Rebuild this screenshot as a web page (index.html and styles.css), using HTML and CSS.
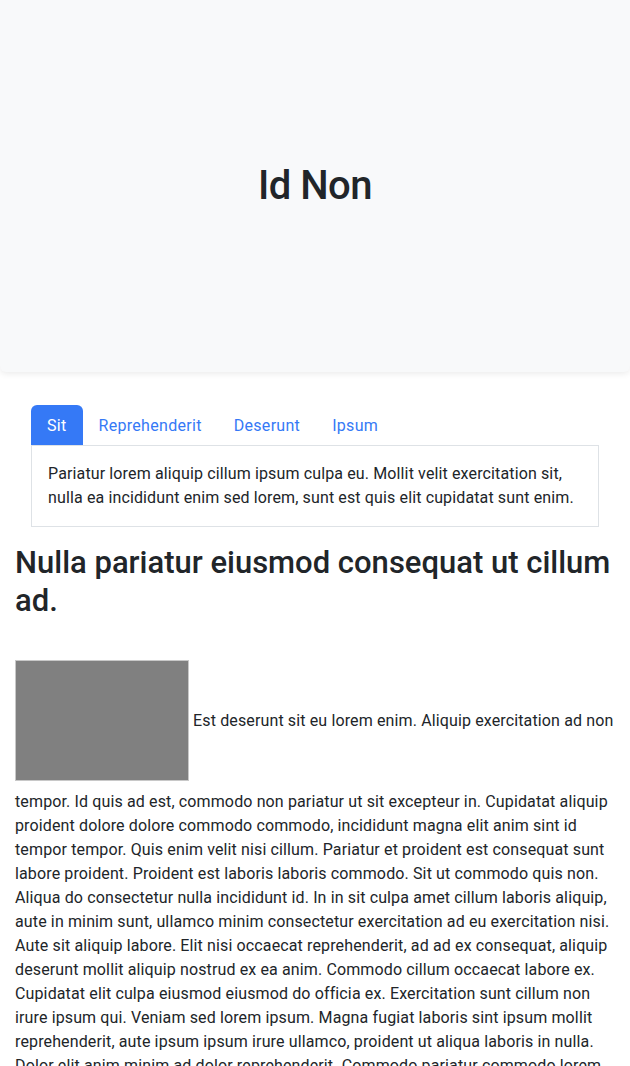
FILE: index.html
```html
<!DOCTYPE html>
<html lang="en">
<head>
<meta charset="utf-8">
<title>Id Non</title>
<link rel="stylesheet" href="styles.css">
</head>
<body>
<header class="hero">
  <h1 class="hero-title">Id Non</h1>
</header>
<main class="container">
  <section class="tabs">
    <nav class="tab-nav">
      <a class="tab active" href="#">Sit</a>
      <a class="tab" href="#">Reprehenderit</a>
      <a class="tab" href="#">Deserunt</a>
      <a class="tab" href="#">Ipsum</a>
    </nav>
    <div class="tab-panel">
      Pariatur lorem aliquip cillum ipsum culpa eu. Mollit velit exercitation sit, nulla ea incididunt enim sed lorem, sunt est quis elit cupidatat sunt enim.
    </div>
  </section>
  <h1 class="heading">Nulla pariatur eiusmod consequat ut cillum ad.</h1>
  <p class="body-text"><span class="placeholder"></span> Est deserunt sit eu lorem enim. Aliquip exercitation ad non tempor. Id quis ad est, commodo non pariatur ut sit excepteur in. Cupidatat aliquip proident dolore dolore commodo commodo, incididunt magna elit anim sint id tempor tempor. Quis enim velit nisi cillum. Pariatur et proident est consequat sunt labore proident. Proident est laboris laboris commodo. Sit ut commodo quis non. Aliqua do consectetur nulla incididunt id. In in sit culpa amet cillum laboris aliquip, aute in minim sunt, ullamco minim consectetur exercitation ad eu exercitation nisi. Aute sit aliquip labore. Elit nisi occaecat reprehenderit, ad ad ex consequat, aliquip deserunt mollit aliquip nostrud ex ea anim. Commodo cillum occaecat labore ex. Cupidatat elit culpa eiusmod eiusmod do officia ex. Exercitation sunt cillum non irure ipsum qui. Veniam sed lorem ipsum. Magna fugiat laboris sint ipsum mollit reprehenderit, aute ipsum ipsum irure ullamco, proident ut aliqua laboris in nulla. Dolor elit anim minim ad dolor reprehenderit. Commodo pariatur commodo lorem ipsum, sunt minim ad dolor.</p>
</main>
</body>
</html>
```

FILE: styles.css
```css
* { box-sizing: border-box; }
html, body {
  margin: 0;
  padding: 0;
  background: #fff;
  color: #212529;
  font-family: Roboto, "Noto Sans", sans-serif;
  font-size: 16px;
  line-height: 24px;
  letter-spacing: 0.13px;
}
.hero {
  height: 372px;
  background: #f8f9fa;
  border-radius: 0 0 6px 6px;
  box-shadow: 0 2px 6px rgba(0,0,0,0.08);
  display: flex;
  align-items: center;
  justify-content: center;
}
.hero-title {
  margin: 0;
  font-size: 40px;
  font-weight: 500;
  line-height: 48px;
  letter-spacing: -0.5px;
}
.container {
  padding: 0 15px;
}
.tabs {
  margin: 33px 16px 0;
}
.tab-nav {
  display: flex;
}
.tab {
  display: block;
  padding: 9px 16px 7px;
  color: #3579f6;
  text-decoration: none;
  border-radius: 6px 6px 0 0;
  line-height: 24px;
  letter-spacing: 0.3px;
}
.tab.active {
  background: #3579f6;
  color: #fff;
}
.tab-panel {
  border: 1px solid #dee2e6;
  padding: 16px;
}
.heading {
  margin: 17px 0 0;
  font-size: 31px;
  font-weight: 500;
  line-height: 37.7px;
  letter-spacing: 0;
}
.body-text {
  margin: 41px 0 0;
}
.placeholder {
  display: inline-block;
  width: 174px;
  height: 121px;
  margin-bottom: 9px;
  background: #808080;
  border: 1px solid #c8c8c8;
  vertical-align: -64px;
}
```
